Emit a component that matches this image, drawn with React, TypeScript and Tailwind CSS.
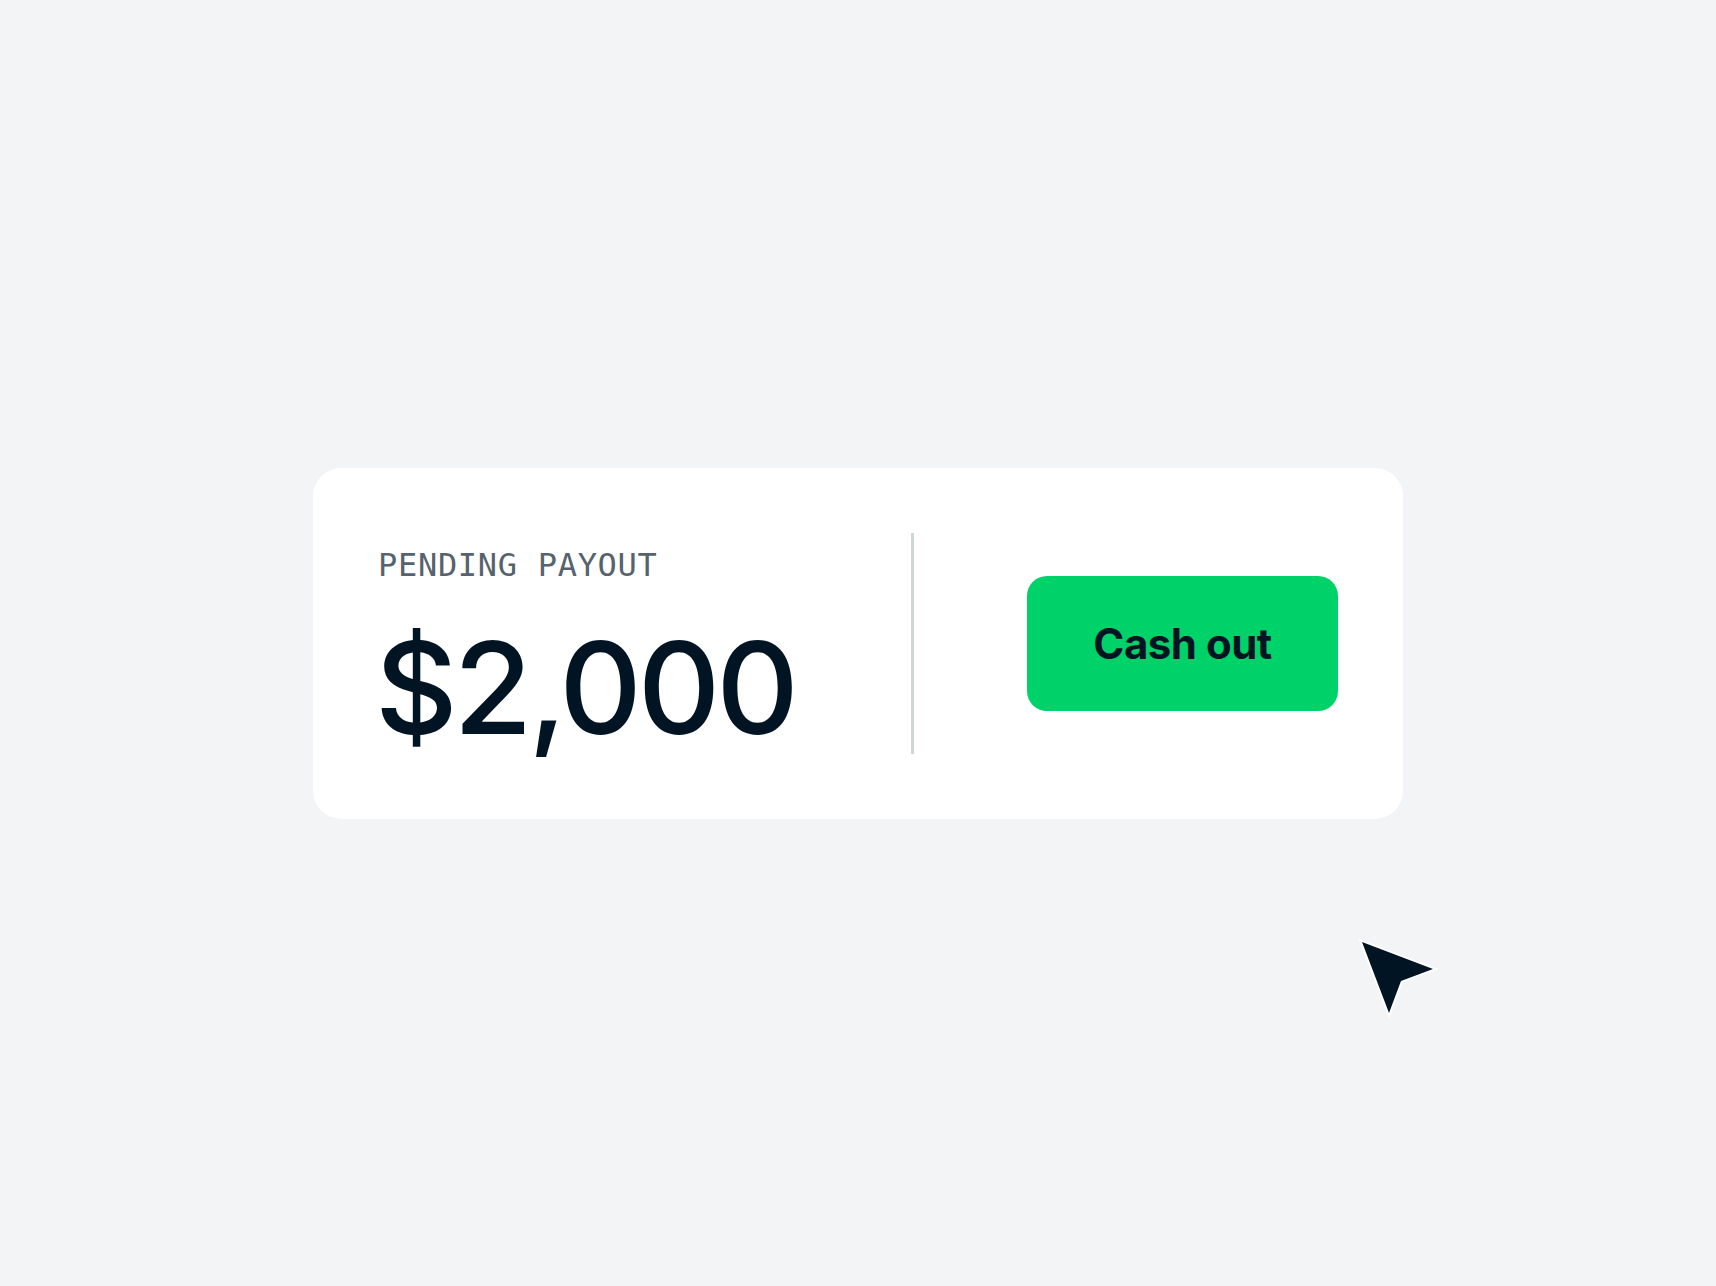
function Pointer() {
  return (
    <svg
      width="96"
      height="96"
      viewBox="0 0 96 96"
      className="absolute left-[1355px] top-[935px]"
    >
      <path
        d="M7 7 L78 34 L46 46 L34 78 Z"
        fill="#011423"
        stroke="#ffffff"
        strokeWidth="4"
        strokeLinejoin="miter"
        paintOrder="stroke"
      />
    </svg>
  );
}

function PayoutCard() {
  return (
    <div className="flex w-[1090px] h-[351px] rounded-[28px] bg-white p-[65px]">
      <div className="w-[533px] pt-4 flex flex-col">
        <span
          className="block text-[32px] leading-8 tracking-[0.7px] text-[#56626e]"
          style={{ fontFamily: '"DejaVu Sans Mono", "Liberation Mono", monospace' }}
        >
          PENDING PAYOUT
        </span>
        <span
          className="block mt-[43px] -ml-[3px] text-[128px] leading-[128px] font-medium tracking-[-4.2px] text-[#011423]"
          style={{ fontFamily: 'Inter, "Liberation Sans", sans-serif' }}
        >
          $2,000
        </span>
      </div>
      <div className="w-[3px] bg-[#cdd7d3]" />
      <div className="flex-1 flex items-center justify-end">
        <button
          type="button"
          className="w-[311px] h-[135px] rounded-[20px] bg-[#00d26a] text-[#011423] text-[42px] font-bold tracking-[-0.5px]"
          style={{ fontFamily: 'Inter, "Liberation Sans", sans-serif' }}
        >
          Cash out
        </button>
      </div>
    </div>
  );
}

export default function App() {
  return (
    <div className="relative min-h-screen w-full bg-[#f3f4f6] flex items-center justify-center">
      <PayoutCard />
      <Pointer />
    </div>
  );
}
